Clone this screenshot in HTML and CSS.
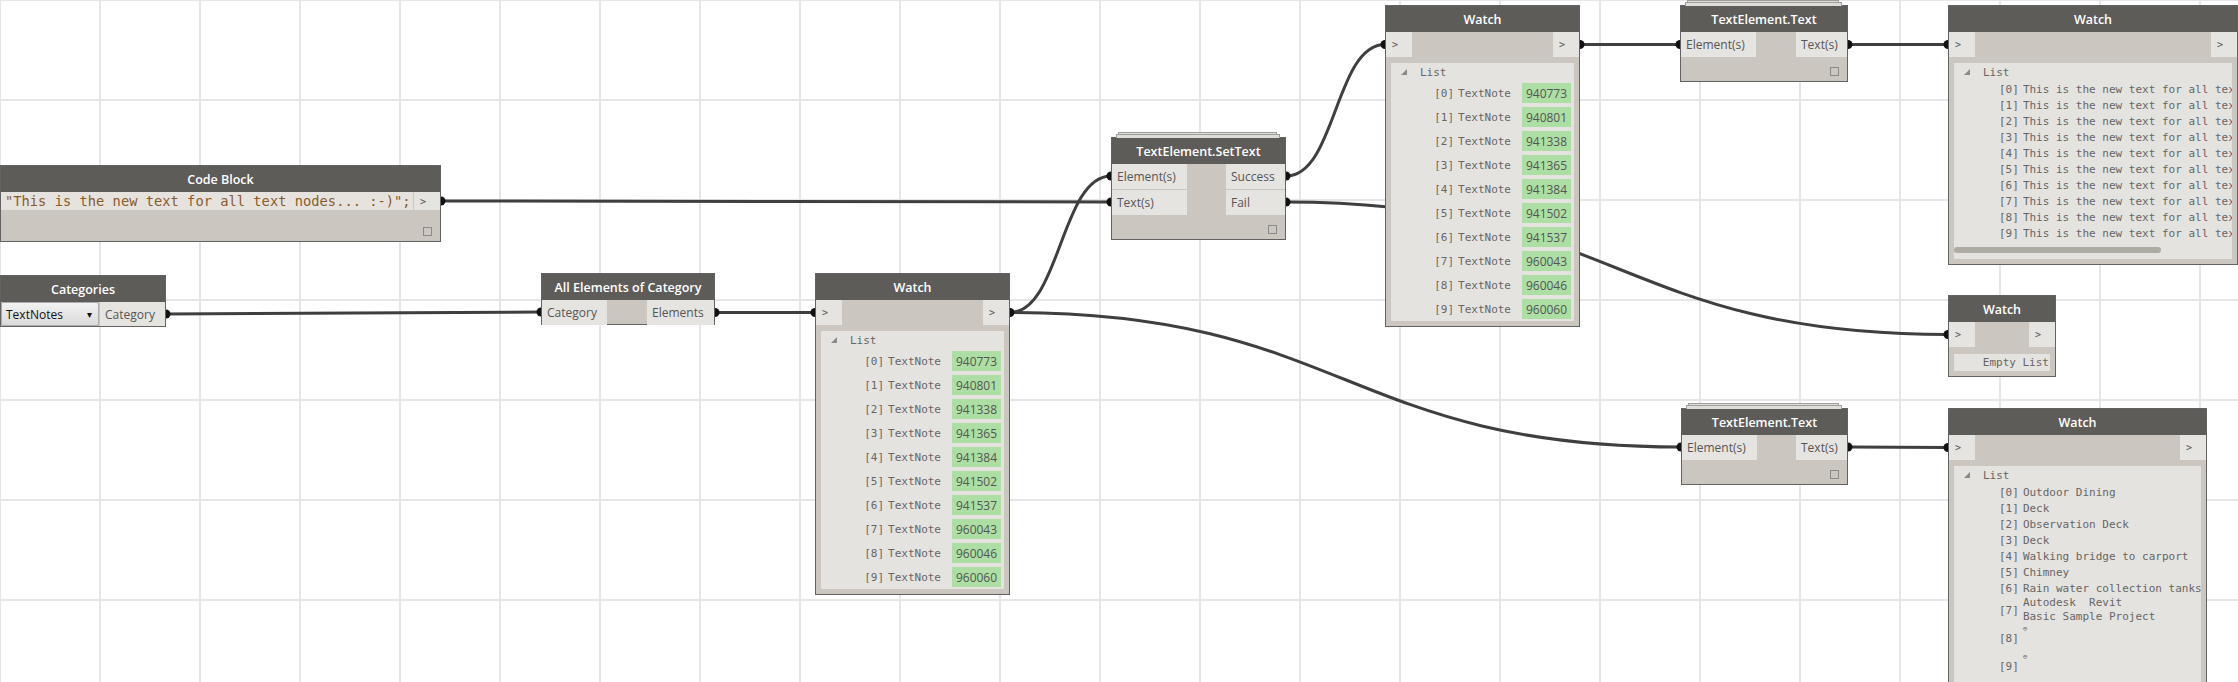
FILE: index.html
```html
<!DOCTYPE html>
<html>
<head>
<meta charset="utf-8">
<title>Dynamo graph</title>
<link rel="stylesheet" href="styles.css">
</head>
<body>
<div class="canvas">
  <svg class="wires" width="2238" height="682" viewBox="0 0 2238 682">
    <g fill="none" stroke="#3f3f3f" stroke-width="3">
      <path d="M441 201 C776 201 776 202 1111 202"/>
      <path d="M166 314 C353 314 354 312 541 312"/>
      <path d="M715 312.5 C765 312.5 765 312.5 815 312.5"/>
      <path d="M1010 312.5 C1060 312.5 1061 176 1111 176"/>
      <path d="M1010 312.5 C1345 312.5 1346 447 1681 447"/>
      <path d="M1286 176 C1336 176 1335 44.5 1385 44.5"/>
      <path d="M1286 202 C1617 202 1617 334.5 1948 334.5"/>
      <path d="M1580 44.5 L1680 44.5"/>
      <path d="M1848 44.5 L1948 44.5"/>
      <path d="M1848 447 L1948 447.5"/>
    </g>
    <g fill="#111">
      <circle cx="441" cy="201" r="4.5"/>
      <circle cx="1111" cy="202" r="4.5"/>
      <circle cx="166" cy="314" r="4.5"/>
      <circle cx="541" cy="312" r="4.5"/>
      <circle cx="715" cy="312.5" r="4.5"/>
      <circle cx="815" cy="312.5" r="4.5"/>
      <circle cx="1010" cy="312.5" r="4.5"/>
      <circle cx="1111" cy="176" r="4.5"/>
      <circle cx="1286" cy="176" r="4.5"/>
      <circle cx="1286" cy="202" r="4.5"/>
      <circle cx="1385" cy="44.5" r="4.5"/>
      <circle cx="1580" cy="44.5" r="4.5"/>
      <circle cx="1680" cy="44.5" r="4.5"/>
      <circle cx="1848" cy="44.5" r="4.5"/>
      <circle cx="1948" cy="44.5" r="4.5"/>
      <circle cx="1948" cy="334.5" r="4.5"/>
      <circle cx="1681" cy="447" r="4.5"/>
      <circle cx="1848" cy="447" r="4.5"/>
      <circle cx="1948" cy="447.5" r="4.5"/>
    </g>
  </svg>

  <!-- Code Block -->
  <div class="node n-code">
    <div class="hdr">Code Block</div>
    <div class="coderow">
      <div class="code">"This is the new text for all text nodes... :-)";</div>
      <div class="arrow small">&gt;</div>
    </div>
    <div class="foot"><span class="sq"></span></div>
  </div>

  <!-- Categories -->
  <div class="node n-cat">
    <div class="hdr">Categories</div>
    <div class="catrow">
      <div class="dropdown"><span>TextNotes</span><span class="caret">&#9662;</span></div>
      <div class="port catport">Category</div>
    </div>
  </div>

  <!-- All Elements of Category -->
  <div class="node n-all">
    <div class="hdr">All Elements of Category</div>
    <div class="ports">
      <div class="col"><div class="port w65">Category</div></div>
      <div class="col out"><div class="port w67">Elements</div></div>
    </div>
  </div>

  <!-- Watch 1 -->
  <div class="node n-w1">
    <div class="hdr">Watch</div>
    <div class="ports">
      <div class="col"><div class="arrow">&gt;</div></div>
      <div class="col out"><div class="arrow">&gt;</div></div>
    </div>
    <div class="list">
      <div class="lhead"><svg class="tri" width="6" height="6" viewBox="0 0 6 6"><polygon points="6,0 6,6 0,6" fill="#8a8a8a"/></svg><span>List</span></div>
      <div class="erow"><span>[0]</span><span>TextNote</span><span class="val">940773</span></div>
      <div class="erow"><span>[1]</span><span>TextNote</span><span class="val">940801</span></div>
      <div class="erow"><span>[2]</span><span>TextNote</span><span class="val">941338</span></div>
      <div class="erow"><span>[3]</span><span>TextNote</span><span class="val">941365</span></div>
      <div class="erow"><span>[4]</span><span>TextNote</span><span class="val">941384</span></div>
      <div class="erow"><span>[5]</span><span>TextNote</span><span class="val">941502</span></div>
      <div class="erow"><span>[6]</span><span>TextNote</span><span class="val">941537</span></div>
      <div class="erow"><span>[7]</span><span>TextNote</span><span class="val">960043</span></div>
      <div class="erow"><span>[8]</span><span>TextNote</span><span class="val">960046</span></div>
      <div class="erow"><span>[9]</span><span>TextNote</span><span class="val">960060</span></div>
    </div>
  </div>

  <!-- TextElement.SetText -->
  <div class="node stacked n-set">
    <div class="hdr">TextElement.SetText</div>
    <div class="ports">
      <div class="col"><div class="port w75">Element(s)</div><div class="port w75">Text(s)</div></div>
      <div class="col out"><div class="port w59">Success</div><div class="port w59">Fail</div></div>
    </div>
    <div class="foot"><span class="sq"></span></div>
  </div>

  <!-- Watch 2 -->
  <div class="node n-w2">
    <div class="hdr">Watch</div>
    <div class="ports">
      <div class="col"><div class="arrow">&gt;</div></div>
      <div class="col out"><div class="arrow">&gt;</div></div>
    </div>
    <div class="list">
      <div class="lhead"><svg class="tri" width="6" height="6" viewBox="0 0 6 6"><polygon points="6,0 6,6 0,6" fill="#8a8a8a"/></svg><span>List</span></div>
      <div class="erow"><span>[0]</span><span>TextNote</span><span class="val">940773</span></div>
      <div class="erow"><span>[1]</span><span>TextNote</span><span class="val">940801</span></div>
      <div class="erow"><span>[2]</span><span>TextNote</span><span class="val">941338</span></div>
      <div class="erow"><span>[3]</span><span>TextNote</span><span class="val">941365</span></div>
      <div class="erow"><span>[4]</span><span>TextNote</span><span class="val">941384</span></div>
      <div class="erow"><span>[5]</span><span>TextNote</span><span class="val">941502</span></div>
      <div class="erow"><span>[6]</span><span>TextNote</span><span class="val">941537</span></div>
      <div class="erow"><span>[7]</span><span>TextNote</span><span class="val">960043</span></div>
      <div class="erow"><span>[8]</span><span>TextNote</span><span class="val">960046</span></div>
      <div class="erow"><span>[9]</span><span>TextNote</span><span class="val">960060</span></div>
    </div>
  </div>

  <!-- TextElement.Text (top) -->
  <div class="node stacked n-tt1">
    <div class="hdr">TextElement.Text</div>
    <div class="ports">
      <div class="col"><div class="port w75">Element(s)</div></div>
      <div class="col out"><div class="port w51">Text(s)</div></div>
    </div>
    <div class="foot"><span class="sq"></span></div>
  </div>

  <!-- Watch 3 -->
  <div class="node n-w3">
    <div class="hdr">Watch</div>
    <div class="ports">
      <div class="col"><div class="arrow">&gt;</div></div>
      <div class="col out"><div class="arrow">&gt;</div></div>
    </div>
    <div class="list">
      <div class="lhead"><svg class="tri" width="6" height="6" viewBox="0 0 6 6"><polygon points="6,0 6,6 0,6" fill="#8a8a8a"/></svg><span>List</span></div>
      <div class="trow"><span>[0]</span><span>This is the new text for all text nodes... :-)</span></div>
      <div class="trow"><span>[1]</span><span>This is the new text for all text nodes... :-)</span></div>
      <div class="trow"><span>[2]</span><span>This is the new text for all text nodes... :-)</span></div>
      <div class="trow"><span>[3]</span><span>This is the new text for all text nodes... :-)</span></div>
      <div class="trow"><span>[4]</span><span>This is the new text for all text nodes... :-)</span></div>
      <div class="trow"><span>[5]</span><span>This is the new text for all text nodes... :-)</span></div>
      <div class="trow"><span>[6]</span><span>This is the new text for all text nodes... :-)</span></div>
      <div class="trow"><span>[7]</span><span>This is the new text for all text nodes... :-)</span></div>
      <div class="trow"><span>[8]</span><span>This is the new text for all text nodes... :-)</span></div>
      <div class="trow"><span>[9]</span><span>This is the new text for all text nodes... :-)</span></div>
      <div class="scroll"></div>
    </div>
  </div>

  <!-- Watch (empty) -->
  <div class="node n-we">
    <div class="hdr">Watch</div>
    <div class="ports">
      <div class="col"><div class="arrow">&gt;</div></div>
      <div class="col out"><div class="arrow">&gt;</div></div>
    </div>
    <div class="empty">Empty List</div>
  </div>

  <!-- TextElement.Text (bottom) -->
  <div class="node stacked n-tt2">
    <div class="hdr">TextElement.Text</div>
    <div class="ports">
      <div class="col"><div class="port w75">Element(s)</div></div>
      <div class="col out"><div class="port w51">Text(s)</div></div>
    </div>
    <div class="foot"><span class="sq"></span></div>
  </div>

  <!-- Watch 4 -->
  <div class="node n-w4">
    <div class="hdr">Watch</div>
    <div class="ports">
      <div class="col"><div class="arrow">&gt;</div></div>
      <div class="col out"><div class="arrow">&gt;</div></div>
    </div>
    <div class="list">
      <div class="lhead"><svg class="tri" width="6" height="6" viewBox="0 0 6 6"><polygon points="6,0 6,6 0,6" fill="#8a8a8a"/></svg><span>List</span></div>
      <div class="trow"><span>[0]</span><span>Outdoor Dining</span></div>
      <div class="trow"><span>[1]</span><span>Deck</span></div>
      <div class="trow"><span>[2]</span><span>Observation Deck</span></div>
      <div class="trow"><span>[3]</span><span>Deck</span></div>
      <div class="trow"><span>[4]</span><span>Walking bridge to carport</span></div>
      <div class="trow"><span>[5]</span><span>Chimney</span></div>
      <div class="trow"><span>[6]</span><span>Rain water collection tanks</span></div>
      <div class="trow multi"><span>[7]</span><span class="lines">Autodesk  Revit
Basic Sample Project</span></div>
      <div class="trow multi low"><span>[8]</span><span class="lines"><span class="glyph">&#8854;</span></span></div>
      <div class="trow multi low"><span>[9]</span><span class="lines"><span class="glyph">&#8854;</span></span></div>
    </div>
  </div>
</div>
</body>
</html>
```

FILE: styles.css
```css
* { box-sizing: border-box; }

body {
  margin: 0;
  background: #fff;
  font-family: "Open Sans", "Noto Sans", sans-serif;
}

.canvas {
  position: relative;
  width: 2238px;
  height: 682px;
  overflow: hidden;
  background-color: #fff;
  background-image:
    linear-gradient(to right, #e6e6e6 2px, transparent 2px),
    linear-gradient(to bottom, #e6e6e6 2px, transparent 2px);
  background-size: 100px 100px;
  background-position: 99px 99px;
}

.wires {
  position: absolute;
  left: 0;
  top: 0;
}

/* ---------- generic node ---------- */
.node {
  position: absolute;
  display: flex;
  flex-direction: column;
  background: #cbc6bf;
  border: 1px solid #626262;
}

.hdr {
  flex: none;
  height: 26px;
  background: #5e5c59;
  color: #fff;
  font-size: 12.5px;
  font-weight: 600;
  display: flex;
  align-items: center;
  justify-content: center;
  white-space: nowrap;
}

.ports {
  flex: none;
  display: flex;
  justify-content: space-between;
}

.col {
  display: flex;
  flex-direction: column;
  gap: 1px;
}

.port {
  height: 25px;
  background: #e6e4e0;
  color: #555;
  font-size: 12px;
  display: flex;
  align-items: center;
  padding: 0 5px;
  white-space: nowrap;
}

.w51 { width: 51px; }
.w59 { width: 59px; }
.w65 { width: 65px; }
.w67 { width: 67px; }
.w75 { width: 75px; }

.arrow {
  width: 26px;
  height: 25px;
  background: #e6e4e0;
  color: #555;
  font-family: "DejaVu Sans Mono", monospace;
  font-size: 10px;
  display: flex;
  align-items: center;
  padding-left: 6px;
}

.arrow.small { height: 18px; }

.foot {
  flex: 1;
  display: flex;
  justify-content: flex-end;
  align-items: flex-end;
  padding: 0 8px 5px 0;
}

.sq {
  width: 9px;
  height: 9px;
  border: 1px solid #8c8a87;
}

/* stacked (lacing) outlines */
.stacked::before,
.stacked::after {
  content: "";
  position: absolute;
  background: #dedcd8;
  border: 1px solid #a09e9b;
  border-bottom: none;
}
.stacked::before { top: -6px; left: 6px; right: 8px; height: 5px; }
.stacked::after { top: -4px; left: 4px; right: 5px; height: 3px; }

/* ---------- watch list ---------- */
.list {
  flex: 1;
  margin: 6px 5px 5px 5px;
  background: #e5e3df;
  overflow: hidden;
  font-family: "DejaVu Sans Mono", monospace;
  font-size: 11px;
  color: #666;
}

.lhead {
  height: 18px;
  display: flex;
  align-items: center;
  padding-left: 10px;
  gap: 13px;
}

.erow {
  height: 24px;
  display: flex;
  align-items: center;
  justify-content: flex-end;
  padding-right: 3px;
  gap: 4px;
  white-space: nowrap;
}

.erow .val { margin-left: 7px; }

.val {
  width: 49px;
  height: 20px;
  background: #addfa4;
  color: #555;
  font-family: "Open Sans", "Noto Sans", sans-serif;
  font-size: 12px;
  display: flex;
  align-items: center;
  justify-content: center;
}

.trow {
  height: 16px;
  display: flex;
  align-items: center;
  padding-left: 45px;
  gap: 4px;
  white-space: pre;
}

.trow.multi { height: 28px; }

.trow.low { align-items: flex-start; }
.trow.low > span:first-child { margin-top: 8px; }

.lines {
  white-space: pre;
  line-height: 14px;
}

.glyph {
  display: block;
  font-size: 7px;
  line-height: 10px;
}

.scroll {
  margin-top: 6px;
  width: 207px;
  height: 6px;
  border-radius: 3px;
  background: #aeaaa4;
}

.empty {
  margin: 7px 5px 5px 5px;
  height: 18px;
  background: #e5e3df;
  font-family: "DejaVu Sans Mono", monospace;
  font-size: 11px;
  color: #666;
  display: flex;
  align-items: center;
  justify-content: flex-end;
  padding-right: 1px;
}

/* ---------- code block ---------- */
.coderow {
  flex: none;
  display: flex;
  gap: 1px;
  height: 18px;
}

.code {
  flex: 1;
  background: #e6e3df;
  color: #8b5a2b;
  font-family: "DejaVu Sans Mono", monospace;
  font-size: 13.75px;
  display: flex;
  align-items: center;
  padding-left: 4px;
  white-space: nowrap;
  overflow: hidden;
}

/* ---------- categories ---------- */
.catrow {
  flex: 1;
  display: flex;
  gap: 1px;
}

.dropdown {
  width: 98px;
  background: linear-gradient(#f2f2f2, #dadada);
  border: 1px solid #acacac;
  border-radius: 2px;
  color: #111;
  font-size: 12px;
  display: flex;
  align-items: center;
  justify-content: space-between;
  padding: 0 6px 0 4px;
}

.caret { font-size: 10px; }

.catport { flex: 1; height: auto; }

/* ---------- node placement on the canvas ---------- */
.n-code { left: 0; top: 165px; width: 441px; height: 77px; }
.n-cat  { left: 0; top: 275px; width: 166px; height: 52px; }
.n-all  { left: 541px; top: 273px; width: 174px; height: 52px; }
.n-w1   { left: 815px; top: 273px; width: 195px; height: 322px; }
.n-set  { left: 1111px; top: 137px; width: 175px; height: 103px; }
.n-w2   { left: 1385px; top: 5px; width: 195px; height: 322px; }
.n-tt1  { left: 1680px; top: 5px; width: 168px; height: 77px; }
.n-w3   { left: 1948px; top: 5px; width: 290px; height: 260px; }
.n-we   { left: 1948px; top: 295px; width: 108px; height: 82px; }
.n-tt2  { left: 1681px; top: 408px; width: 167px; height: 77px; }
.n-w4   { left: 1948px; top: 408px; width: 259px; height: 300px; }
```
